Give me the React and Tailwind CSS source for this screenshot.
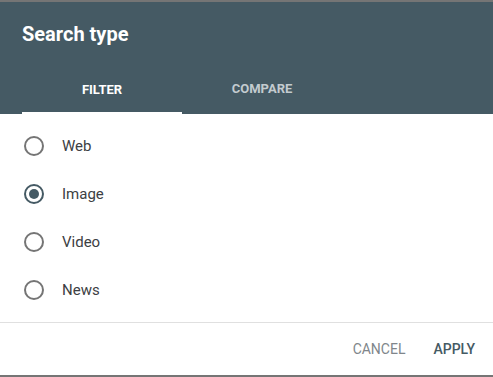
import { useState } from "react";

const options = ["Web", "Image", "Video", "News"];

const Radio = ({ checked }) => {
  return (
    <div
      className={
        "w-5 h-5 rounded-full border-2 flex items-center justify-center " +
        (checked ? "border-[#455a64]" : "border-[#757575]")
      }
    >
      {checked && <div className="w-[10px] h-[10px] rounded-full bg-[#455a64]" />}
    </div>
  );
};

const App = () => {
  const [selected, setSelected] = useState("Image");

  return (
    <div className="w-[493px] h-[377px] bg-white flex flex-col font-['Roboto',sans-serif] border-t-2 border-b-2 border-[#757575]">
      {/* header */}
      <div className="bg-[#455a64] h-[112px] flex flex-col">
        <div className="pl-[22px] pt-5 text-white text-[20px] leading-6 font-bold">
          Search type
        </div>
        <div className="flex mt-5 pl-[22px] h-12">
          <div className="w-[160px] flex items-center justify-center text-white text-[13px] font-bold border-b-2 border-white pt-[2px]">
            FILTER
          </div>
          <div className="w-[160px] flex items-center justify-center text-[#c3cbcf] text-[13px] font-bold pb-[2px]">
            COMPARE
          </div>
        </div>
      </div>

      {/* options */}
      <div className="py-2 border-b border-[#e0e0e0]">
        {options.map((item) => {
          return (
            <div
              key={item}
              className="h-12 flex items-center pl-6 cursor-pointer"
              onClick={() => setSelected(item)}
            >
              <Radio checked={selected === item} />
              <div className="ml-[18px] text-[15px] text-[#3c4043]">{item}</div>
            </div>
          );
        })}
      </div>

      {/* footer */}
      <div className="flex-1 flex items-center justify-end pr-[18px] gap-7 text-[14px]">
        <div className="text-[#80868b] cursor-pointer">CANCEL</div>
        <div className="text-[#455a64] font-medium cursor-pointer">APPLY</div>
      </div>
    </div>
  );
};

export default App;
